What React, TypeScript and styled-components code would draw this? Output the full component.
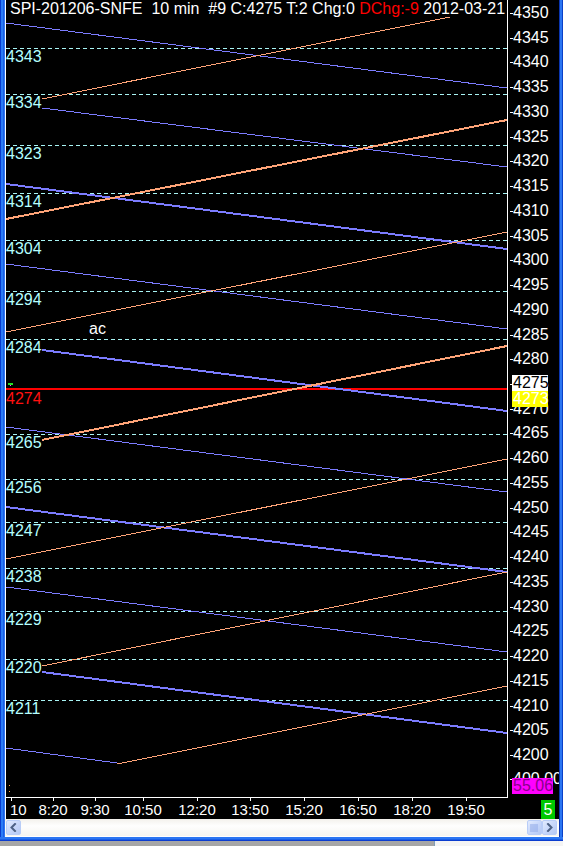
import React from "react";
import styled, { createGlobalStyle, css } from "styled-components";

const GlobalStyle = createGlobalStyle`
  html, body { margin: 0; padding: 0; background: #ffffff; }
  body { font-family: "Liberation Sans", Arial, sans-serif; }
  #root { width: 563px; height: 846px; overflow: hidden; }
`;

const PRICE_TOP = 13;
const PX_PER_PT = 4.947;
const priceY = (p: number) => PRICE_TOP + (4350 - p) * PX_PER_PT;

const PANE_X = 6;

const levels: { label: string; y: number }[] = [
  { label: "4343", y: 48 },
  { label: "4334", y: 94 },
  { label: "4323", y: 145 },
  { label: "4314", y: 193 },
  { label: "4304", y: 240 },
  { label: "4294", y: 291 },
  { label: "4284", y: 339 },
  { label: "4265", y: 434 },
  { label: "4256", y: 479 },
  { label: "4247", y: 522 },
  { label: "4238", y: 568 },
  { label: "4229", y: 611 },
  { label: "4220", y: 659 },
  { label: "4211", y: 700 },
];

type Seg = { x1: number; y1: number; x2: number; y2: number; w: number };

const blueLines: Seg[] = [
  { x1: 6, y1: 23, x2: 507, y2: 88, w: 1 },
  { x1: 42, y1: 108, x2: 507, y2: 167, w: 1 },
  { x1: 6, y1: 184, x2: 507, y2: 249, w: 2 },
  { x1: 6, y1: 264, x2: 507, y2: 329, w: 1 },
  { x1: 42, y1: 350, x2: 507, y2: 411, w: 2 },
  { x1: 6, y1: 427, x2: 507, y2: 492, w: 1 },
  { x1: 6, y1: 507, x2: 507, y2: 572, w: 2 },
  { x1: 6, y1: 587, x2: 507, y2: 652, w: 1 },
  { x1: 42, y1: 672, x2: 507, y2: 733, w: 2 },
  { x1: 6, y1: 748, x2: 117, y2: 763, w: 1 },
];

const orangeLines: Seg[] = [
  { x1: 42, y1: 99, x2: 450, y2: 17, w: 1 },
  { x1: 6, y1: 219, x2: 507, y2: 120, w: 2 },
  { x1: 6, y1: 332, x2: 507, y2: 232, w: 1 },
  { x1: 42, y1: 440, x2: 507, y2: 346, w: 2 },
  { x1: 6, y1: 559, x2: 507, y2: 459, w: 1 },
  { x1: 42, y1: 666, x2: 507, y2: 572, w: 1 },
  { x1: 117, y1: 764, x2: 507, y2: 686, w: 1 },
];

const axisPrices: number[] = [];
for (let p = 4350; p >= 4200; p -= 5) axisPrices.push(p);

const timeTicks: { label: string; x: number; align: "left" | "center" }[] = [
  { label: "10", x: 11, align: "left" },
  { label: "8:20", x: 53, align: "center" },
  { label: "9:30", x: 95, align: "center" },
  { label: "10:50", x: 143, align: "center" },
  { label: "12:20", x: 197, align: "center" },
  { label: "13:50", x: 250, align: "center" },
  { label: "15:20", x: 304, align: "center" },
  { label: "16:50", x: 358, align: "center" },
  { label: "18:20", x: 412, align: "center" },
  { label: "19:50", x: 466, align: "center" },
];

/* ---------- window frame ---------- */

const Window = styled.div`
  width: 563px;
  height: 846px;
  display: flex;
  flex-direction: column;
  background: #ffffff;
`;

const Body = styled.div`
  display: flex;
  height: 837px;
`;

const SideBorder = styled.div<{ $side: "left" | "right" }>`
  flex: none;
  ${(p) =>
    p.$side === "left"
      ? css`
          width: 5px;
          background: linear-gradient(
            to right,
            #0a3ccf 0 1px,
            #2b7cf6 1px 3px,
            #1a5fe6 3px 4px,
            #2f78f2 4px 5px
          );
        `
      : css`
          width: 4px;
          background: linear-gradient(
            to right,
            #0b36b0 0 1px,
            #2b76f2 1px 3px,
            #0a40c8 3px 4px
          );
        `}
`;

const BottomBorder = styled.div`
  height: 4px;
  background: linear-gradient(to bottom, #2b76f2 0 2px, #1a5fe6 2px 3px, #0a3ccf 3px 4px);
`;

const BelowStrip = styled.div`
  flex: 1;
  display: flex;
`;

const StripPart = styled.div<{ $light?: boolean }>`
  ${(p) =>
    p.$light
      ? css`
          flex: 1;
          background: #f4f4f4;
          border-left: 1px solid #7f9db9;
        `
      : css`
          width: 434px;
          background: #a6a6a6;
        `}
`;

const Content = styled.div`
  flex: 1;
  min-width: 0;
  display: flex;
  flex-direction: column;
`;

/* ---------- plot ---------- */

const Plot = styled.div`
  height: 819px;
  display: flex;
  flex-direction: column;
  background: #000000;
  border-left: 1px solid #ffffff;
  box-sizing: border-box;
`;

const ChartRow = styled.div`
  height: 798px;
  display: flex;
`;

const ChartPane = styled.div`
  position: relative;
  width: 502px;
  height: 798px;
  box-sizing: border-box;
  border-right: 1px solid #ffffff;
  border-bottom: 1px solid #ffffff;
  overflow: hidden;
  flex: none;
`;

const ChartSvg = styled.svg`
  position: absolute;
  left: 0;
  top: 0;
  display: block;
`;

const Title = styled.div`
  position: relative;
  z-index: 1;
  padding: 1px 0 0 4px;
  color: #ffffff;
  font-size: 16px;
  line-height: 16px;
  white-space: pre;
`;

const Red = styled.span`
  color: #ff0000;
`;

const LevelLabel = styled.span<{ $tone?: "cyan" | "red" }>`
  position: absolute;
  left: 0;
  z-index: 1;
  font-size: 16px;
  line-height: 16px;
  color: ${(p) => (p.$tone === "red" ? "#ff1010" : "#b4ffff")};
`;

const Note = styled.span`
  position: absolute;
  z-index: 1;
  font-size: 16px;
  line-height: 16px;
  color: #ffffff;
`;

/* ---------- price axis ---------- */

const PriceAxis = styled.div`
  position: relative;
  flex: 1;
  overflow: hidden;
`;

const AxisLabel = styled.span`
  position: absolute;
  left: 0;
  padding-left: 5px;
  font-size: 16px;
  line-height: 16px;
  color: #ffffff;
  white-space: nowrap;
  &::before {
    content: "";
    position: absolute;
    left: 2px;
    top: 8px;
    width: 3px;
    height: 1px;
    background: #ffffff;
  }
`;

const PriceTag = styled.span<{ $kind: "last" | "bid" | "stat" }>`
  position: absolute;
  left: 4px;
  z-index: 1;
  font-size: 16px;
  line-height: 16px;
  padding: 0 2px 0 1px;
  white-space: nowrap;
  ${(p) =>
    p.$kind === "last"
      ? css`
          background: #ffffff;
          color: #000000;
          width: 33px;
        `
      : p.$kind === "bid"
      ? css`
          background: #ffff00;
          color: #ffffff;
          width: 33px;
        `
      : css`
          background: #ff00ff;
          color: #8a008a;
          width: 38px;
        `}
`;

/* ---------- time axis ---------- */

const TimeRow = styled.div`
  flex: 1;
  display: flex;
`;

const TimeScale = styled.div`
  position: relative;
  width: 502px;
  flex: none;
`;

const TimeLabel = styled.span<{ $align: "left" | "center" }>`
  position: absolute;
  top: 4px;
  font-size: 15px;
  line-height: 16px;
  color: #ffffff;
  white-space: nowrap;
  transform: ${(p) => (p.$align === "center" ? "translateX(-50%)" : "translateX(-1px)")};
`;

const Tick = styled.span`
  position: absolute;
  top: 0;
  width: 1px;
  height: 3px;
  background: #ffffff;
`;

const Corner = styled.div`
  flex: 1;
  display: flex;
  justify-content: flex-end;
  align-items: flex-end;
  padding-right: 4px;
`;

const CountBadge = styled.span`
  width: 14px;
  height: 19px;
  background: #00c800;
  color: #ffffff;
  font-size: 16px;
  line-height: 19px;
  text-align: center;
`;

/* ---------- scrollbar ---------- */

const Scrollbar = styled.div`
  height: 17px;
  display: flex;
  align-items: flex-end;
  padding: 0 2px 1px 1px;
  box-sizing: border-box;
  background: linear-gradient(to bottom, #f3f1ec 0%, #fefefe 40%, #f6f5f0 100%);
`;

const Track = styled.div`
  flex: 1;
`;

const ScrollButton = styled.div`
  width: 15px;
  height: 15px;
  box-sizing: border-box;
  border: 1px solid #b9cdf7;
  border-radius: 2px;
  background: linear-gradient(135deg, #e2ebfe 0%, #c6d6fa 55%, #b4c8f3 100%);
  display: flex;
  align-items: center;
  justify-content: center;
`;

const Thumb = styled(ScrollButton)`
  width: 15px;
  margin-right: 0;
`;

/* ---------- icons ---------- */

const Chevron = ({ dir }: { dir: "left" | "right" }) => (
  <svg width="9" height="9" viewBox="0 0 9 9">
    <path
      d={dir === "left" ? "M6 1 L2.5 4.5 L6 8" : "M3 1 L6.5 4.5 L3 8"}
      stroke="#4d6185"
      strokeWidth="2"
      fill="none"
      strokeLinecap="square"
    />
  </svg>
);

const Grip = () => (
  <svg width="9" height="8" viewBox="0 0 9 8">
    {[1, 3, 5, 7].map((x) => (
      <rect key={x} x={x - 0.5} y={0} width={1} height={8} fill="#8ea8e8" />
    ))}
  </svg>
);

/* ---------- app ---------- */

export default function App() {
  return (
    <>
      <GlobalStyle />
      <Window>
        <Body>
          <SideBorder $side="left" />
          <Content>
            <Plot>
              <ChartRow>
                <ChartPane>
                  <ChartSvg width={501} height={797} viewBox="6 0 501 797" shapeRendering="crispEdges">
                    {levels.map((l) => (
                      <line
                        key={l.label}
                        x1={6}
                        x2={507}
                        y1={l.y + 0.5}
                        y2={l.y + 0.5}
                        stroke="#a8f4f4"
                        strokeWidth={1}
                        strokeDasharray="4 3"
                      />
                    ))}
                    <rect x={6} y={388} width={501} height={2} fill="#ff0000" />
                    {blueLines.map((s, i) => (
                      <line key={`b${i}`} {...s} stroke="#7c7cff" strokeWidth={s.w} />
                    ))}
                    {orangeLines.map((s, i) => (
                      <line key={`o${i}`} {...s} stroke="#ffa478" strokeWidth={s.w} />
                    ))}
                    <rect x={8} y={383} width={5} height={2} fill="#20e020" />
                    <rect x={10} y={385} width={1} height={1} fill="#ff40ff" />
                    <rect x={9} y={785} width={1} height={1} fill="#ffa040" />
                    <rect x={9} y={791} width={1} height={1} fill="#ffa040" />
                  </ChartSvg>
                  <Title>
                    {"SPI-201206-SNFE  10 min  #9 C:4275 T:2 Chg:0 "}
                    <Red>DChg:-9</Red>
                    {" 2012-03-21"}
                  </Title>
                  {levels.map((l) => (
                    <LevelLabel key={l.label} style={{ top: l.y + 1 }}>
                      {l.label}
                    </LevelLabel>
                  ))}
                  <LevelLabel $tone="red" style={{ top: 391 }}>
                    4274
                  </LevelLabel>
                  <Note style={{ left: 89 - PANE_X, top: 321 }}>ac</Note>
                </ChartPane>
                <PriceAxis>
                  {axisPrices.map((p) => (
                    <AxisLabel key={p} style={{ top: Math.round(priceY(p) - 8) }}>
                      {p}
                    </AxisLabel>
                  ))}
                  <AxisLabel style={{ top: 771 }}>400.00</AxisLabel>
                  <PriceTag $kind="last" style={{ top: 375 }}>
                    4275
                  </PriceTag>
                  <PriceTag $kind="bid" style={{ top: 391 }}>
                    4273
                  </PriceTag>
                  <PriceTag $kind="stat" style={{ top: 778 }}>
                    55.06
                  </PriceTag>
                </PriceAxis>
              </ChartRow>
              <TimeRow>
                <TimeScale>
                  {timeTicks.map((t) => (
                    <React.Fragment key={t.label}>
                      <Tick style={{ left: t.x - PANE_X }} />
                      <TimeLabel $align={t.align} style={{ left: t.x - PANE_X }}>
                        {t.label}
                      </TimeLabel>
                    </React.Fragment>
                  ))}
                </TimeScale>
                <Corner>
                  <CountBadge>5</CountBadge>
                </Corner>
              </TimeRow>
            </Plot>
            <Scrollbar>
              <ScrollButton>
                <Chevron dir="left" />
              </ScrollButton>
              <Track />
              <Thumb>
                <Grip />
              </Thumb>
              <ScrollButton>
                <Chevron dir="right" />
              </ScrollButton>
            </Scrollbar>
          </Content>
          <SideBorder $side="right" />
        </Body>
        <BottomBorder />
        <BelowStrip>
          <StripPart />
          <StripPart $light />
        </BelowStrip>
      </Window>
    </>
  );
}
